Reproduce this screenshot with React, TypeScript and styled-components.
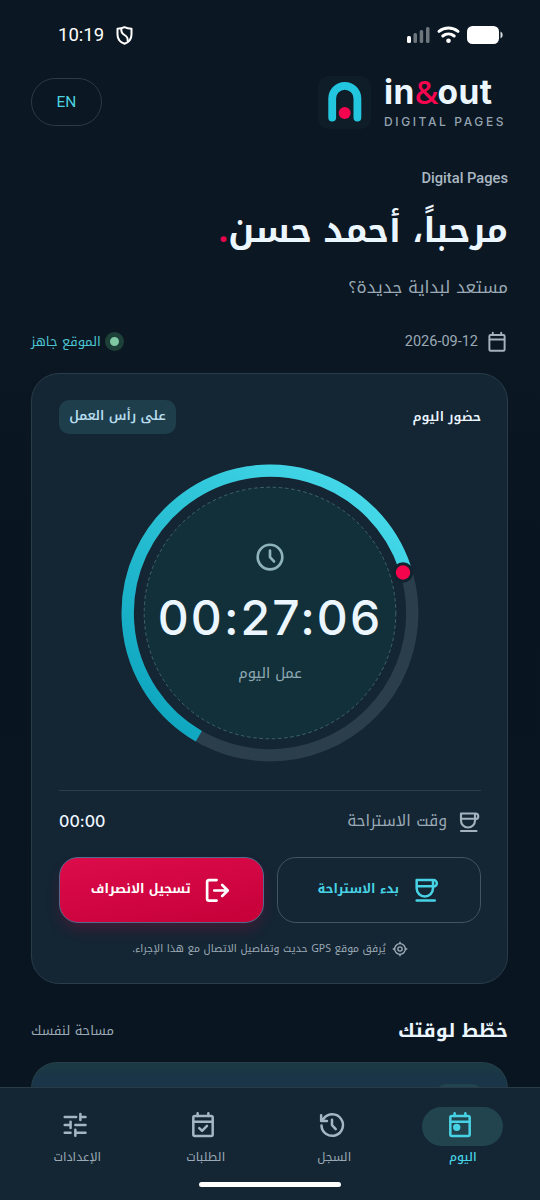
import React from 'react';
import styled, { createGlobalStyle } from 'styled-components';

const arabic = `'Noto Kufi Arabic', Roboto, 'DejaVu Sans', sans-serif`;

const GlobalStyle = createGlobalStyle`
  * { box-sizing: border-box; }
  body { margin: 0; background: #0b1722; }
`;

const Screen = styled.div`
  width: 540px;
  height: 1200px;
  overflow: hidden;
  display: flex;
  flex-direction: column;
  background: linear-gradient(180deg, #0b1722 0%, #0b1722 28%, #081420 45%, #091520 100%);
  color: #ecf6ff;
  font-family: ${arabic};
`;

const StatusBar = styled.header`
  display: flex;
  justify-content: space-between;
  align-items: center;
  height: 54px;
  flex: none;
  padding: 16px 37px 0 58px;
`;

const Cluster = styled.div<{ $gap: number }>`
  display: flex;
  align-items: center;
  gap: ${(p) => p.$gap}px;
`;

const Time = styled.span`
  font: 400 18.5px/24px Roboto, sans-serif;
  color: #fff;
`;

const Content = styled.main`
  flex: 1;
  min-height: 0;
  overflow: hidden;
  padding: 16px 32px 0 31px;
  display: flex;
  flex-direction: column;
`;

const TopRow = styled.div`
  display: flex;
  justify-content: space-between;
  align-items: center;
  height: 64px;
  flex: none;
`;

const LangButton = styled.button`
  width: 71px;
  height: 48px;
  border-radius: 24px;
  border: 1px solid #2b3a46;
  background: none;
  color: #4cd0df;
  font: 400 15.5px/20px Roboto, sans-serif;
  padding: 0;
`;

const Brand = styled.div`
  display: flex;
  align-items: center;
  gap: 13px;
  width: 190px;
`;

const BrandTile = styled.div`
  width: 53px;
  height: 53px;
  flex: none;
  border-radius: 11px;
  background: #0f1d29;
`;

const BrandText = styled.div`
  display: flex;
  flex-direction: column;
`;

const BrandName = styled.div`
  font: 700 33.5px/46px Inter, sans-serif;
  letter-spacing: 0.4px;
  color: #ecf6ff;
  white-space: nowrap;
  margin: -7px 0 -5px;
`;

const Ampersand = styled.span`
  color: #f5054f;
  font-family: 'Noto Sans', sans-serif;
  font-size: 32px;
  line-height: 40px;
  font-weight: 500;
  letter-spacing: -0.8px;
`;

const BrandTag = styled.div`
  font: 500 12px/14px Inter, sans-serif;
  letter-spacing: 2.6px;
  color: #94a3b0;
  white-space: nowrap;
  margin-top: 5px;
`;

const Greeting = styled.section`
  display: flex;
  flex-direction: column;
  height: 192px;
  flex: none;
  direction: rtl;
`;

const Company = styled.div`
  font: 500 14.7px/20px Roboto, sans-serif;
  color: #aab8c3;
  margin-top: 34px;
`;

const Hello = styled.h1`
  margin: 13px 0 0;
  height: 60px;
  font-family: ${arabic};
  font-size: 34.1px;
  font-weight: 700;
  line-height: 60px;
  white-space: nowrap;
`;

const Accent = styled.span`
  color: #e3064d;
`;

const Ready = styled.p`
  margin: 12px 0 0;
  font-size: 17px;
  line-height: 28px;
  color: #9aa9b5;
  white-space: nowrap;
`;

const Between = styled.div<{ $h: number; $top?: number }>`
  display: flex;
  direction: rtl;
  align-items: center;
  justify-content: space-between;
  height: ${(p) => p.$h}px;
  padding-top: ${(p) => p.$top ?? 0}px;
  flex: none;
`;

const Label = styled.span<{ $size: number; $color: string; $weight?: number; $latin?: string }>`
  font-family: ${(p) => p.$latin ?? arabic};
  font-size: ${(p) => p.$size}px;
  font-weight: ${(p) => p.$weight ?? 400};
  font-feature-settings: 'calt' ${(p) => (p.$latin ? 0 : 1)};
  color: ${(p) => p.$color};
  line-height: 1.5;
  white-space: nowrap;
`;

const Dot = styled.i`
  width: 19px;
  height: 19px;
  border-radius: 50%;
  border: 5.5px solid #1d4039;
  background: #7fcaa2;
`;

const Card = styled.section`
  height: 611px;
  flex: none;
  margin-top: 15px;
  border: 1px solid #2a3c49;
  border-radius: 28px;
  background: #142533;
  padding: 27px 26px 0 27px;
  display: flex;
  flex-direction: column;
`;

const CardHead = styled(Between)`
  padding-bottom: 2px;
`;

const Badge = styled.span`
  width: 117px;
  height: 34px;
  display: flex;
  align-items: center;
  justify-content: center;
  padding-bottom: 2px;
  border-radius: 10px;
  background: #1f3e4c;
`;

const Dial = styled.div`
  display: grid;
  place-items: center;
  height: 355px;
  flex: none;
  > * { grid-area: 1 / 1; }
`;

const DialFace = styled.div`
  display: flex;
  flex-direction: column;
  align-items: center;
  gap: 15px;
  height: 144px;
`;

const Timer = styled.div`
  font: 500 48px/60px Inter, sans-serif;
  font-feature-settings: 'calt' 0;
  letter-spacing: 2.1px;
  color: #ecf6ff;
`;

const Divider = styled.hr`
  width: 100%;
  height: 1px;
  flex: none;
  border: 0;
  margin: 0;
  background: #2c3e4b;
`;

const Actions = styled.div`
  display: grid;
  grid-template-columns: 1fr 1fr;
  direction: rtl;
  gap: 13px;
  flex: none;
  margin-top: 5px;
`;

const Action = styled.button<{ $primary?: boolean }>`
  height: 66px;
  border-radius: 19px;
  border: 1px solid ${(p) => (p.$primary ? '#55698c' : '#405461')};
  background: ${(p) => (p.$primary ? 'linear-gradient(170deg, #dc0c4b, #c60039)' : 'none')};
  box-shadow: ${(p) => (p.$primary ? '0 8px 16px -4px rgba(214, 5, 70, 0.27)' : 'none')};
  display: flex;
  align-items: center;
  justify-content: center;
  gap: ${(p) => (p.$primary ? 11 : 13)}px;
  padding: 0 ${(p) => (p.$primary ? 2 : 0)}px 1px 0;
  font-family: ${arabic};
`;

const Note = styled.div`
  display: flex;
  direction: rtl;
  align-items: center;
  justify-content: center;
  gap: 6px;
  height: 51px;
`;

const Plan = styled.div`
  height: 40px;
  flex: none;
  border: 1px solid #263f48;
  border-bottom: 0;
  border-radius: 26px 26px 0 0;
  background: linear-gradient(180deg, #1b3944, #1a3547 40%);
  display: flex;
  justify-content: flex-end;
  padding: 21px 22px 0;
`;

const PlanChip = styled.div`
  width: 52px;
  height: 30px;
  border-radius: 14px;
  background: #22444e;
`;

const NavBar = styled.nav`
  height: 113px;
  flex: none;
  border-top: 1.5px solid #2a3c4a;
  background: #142533;
  display: flex;
  flex-direction: column;
  align-items: center;
`;

const NavItems = styled.div`
  display: flex;
  direction: rtl;
  width: 514px;
  height: 94px;
  padding-top: 19px;
`;

const NavItem = styled.div`
  flex: 1;
  display: flex;
  flex-direction: column;
  align-items: center;
  gap: 2px;
`;

const NavPill = styled.div<{ $active?: boolean }>`
  width: 81px;
  height: 39px;
  border-radius: 20px;
  display: flex;
  align-items: center;
  justify-content: center;
  padding: 0 5px 3px 0;
  background: ${(p) => (p.$active ? '#21444f' : 'none')};
`;

const HomeBar = styled.div`
  width: 142px;
  height: 5px;
  border-radius: 3px;
  background: #fff;
`;

type IconProps = { size: number; color: string; w?: number; children: React.ReactNode };
const Icon = ({ size, color, w = 2.15, children }: IconProps) => (
  <svg width={size} height={size} viewBox="0 0 24 24" fill="none" stroke={color} strokeWidth={w}
    strokeLinecap="round" strokeLinejoin="round">{children}</svg>
);

const Calendar = ({ size, color, children }: { size: number; color: string; children?: React.ReactNode }) => (
  <Icon size={size} color={color}>
    <rect x="3.7" y="4.3" width="16.6" height="17.2" rx="1.3" />
    <path d="M4 9.2h16M7.4 2v2.3M16.6 2v2.3" />
    {children}
  </Icon>
);

const Cup = ({ size, color }: { size: number; color: string }) => (
  <Icon size={size} color={color}>
    <path d="M4 3.5h14.5a2.75 2.75 0 0 1 0 5.6H18V3.5M4 3.5v7a7 7 0 0 0 14 0V9.1M4 8.7h14M4 21h15.5" />
  </Icon>
);

const Exit = () => (
  <Icon size={28} color="#fff" w={2.3}>
    <path d="M12.5 3.5H6A1.6 1.6 0 0 0 4.4 5v14.5A1.6 1.6 0 0 0 6 21.1h6.5M10.5 12.4H22M17.3 7.7l4.8 4.7-4.8 4.7" />
  </Icon>
);

const RingDial = () => (
  <svg width="300" height="300" viewBox="-150 -150 300 300" fill="none">
    <defs>
      <linearGradient id="arc" x1="-90" y1="130" x2="110" y2="-100" gradientUnits="userSpaceOnUse">
        <stop offset="0" stopColor="#0ea6bf" />
        <stop offset="0.6" stopColor="#2dc4d8" />
        <stop offset="1" stopColor="#43d7e8" />
      </linearGradient>
    </defs>
    <circle r="142.3" stroke="#2a3e4c" strokeWidth="12.3" />
    <path d="M-71.2 123.2A142.3 142.3 0 1 1 135 -45" stroke="url(#arc)" strokeWidth="12.3" />
    <circle r="125.8" fill="#12303a" stroke="#3d646b" strokeWidth="1" strokeDasharray="3.6 2.6" />
    <circle cx="133" cy="-40.5" r="10.3" fill="#122330" />
    <circle cx="133" cy="-40.5" r="7.2" fill="#f4044c" />
  </svg>
);

const muted = '#a5b5c4';
const soft = '#9aa9b5';

export default function App() {
  return (
    <Screen>
      <GlobalStyle />
      <StatusBar>
        <Cluster $gap={12}>
          <Time>10:19</Time>
          <svg width="17" height="19" viewBox="0 0 17 19" fill="none" stroke="#fff" strokeWidth="2" strokeLinejoin="round">
            <path d="M8.5 1.2C6.5 2.3 4 2.8 1.5 2.8V8.5C1.5 13 4.5 16.3 8.5 17.7 12.5 16.3 15.5 13 15.5 8.5V2.8C13 2.8 10.5 2.3 8.5 1.2Z" />
            <path d="M5.3 2.8C5 6 6 7.5 8.5 9 11 10.5 12.3 12 11.5 15" />
          </svg>
        </Cluster>
        <svg width="97" height="20" viewBox="0 0 97 20">
          <rect x="1" y="11" width="4" height="7" rx="1.5" fill="#fff" />
          <g fill="#6e767d">
            <rect x="7.5" y="8" width="3.5" height="10" rx="1.5" />
            <rect x="13.7" y="5" width="3.5" height="13" rx="1.5" />
            <rect x="20" y="2" width="3.5" height="16" rx="1.5" />
          </g>
          <g fill="none" stroke="#fff" strokeWidth="3" strokeLinecap="round">
            <path d="M33 6.3a15 15 0 0 1 19 0M36.8 11a9 9 0 0 1 11.4 0" />
          </g>
          <circle cx="42.5" cy="15.8" r="2.3" fill="#fff" />
          <rect x="61" y="1" width="32" height="18" rx="5.5" fill="#fff" />
          <path d="M94.5 6.5Q96.7 7 96.7 10T94.5 13.5Z" fill="#d8dcdf" />
        </svg>
      </StatusBar>
      <Content>
        <TopRow>
          <LangButton>EN</LangButton>
          <Brand>
            <BrandTile>
              <svg width="53" height="53" viewBox="0 0 53 53" fill="none">
                <path d="M14.2 41.500V22.500a12.600 12.600 0 0 1 25.200 0v19" stroke="#22c7df" strokeWidth="7.8" strokeLinecap="round" />
                <circle cx="26.7" cy="37" r="6" fill="#f5054f" />
              </svg>
            </BrandTile>
            <BrandText>
              <BrandName>in<Ampersand>&amp;</Ampersand>out</BrandName>
              <BrandTag>DIGITAL PAGES</BrandTag>
            </BrandText>
          </Brand>
        </TopRow>
        <Greeting>
          <Company>Digital Pages</Company>
          <Hello>مرحباً، أحمد حسن<Accent>.</Accent></Hello>
          <Ready>مستعد لبداية جديدة؟</Ready>
        </Greeting>
        <Between $h={32}>
          <Cluster $gap={8}>
            <Calendar size={22} color="#a3b2bd" />
            <Label $size={14.5} $color={soft} $latin="Roboto, sans-serif">2026-09-12</Label>
          </Cluster>
          <Cluster $gap={4}>
            <Dot />
            <Label $size={13.1} $color="#4cc3d1">الموقع جاهز</Label>
          </Cluster>
        </Between>
        <Card>
          <CardHead $h={34}>
            <Label $size={13} $color="#ecf6ff" $weight={600}>حضور اليوم</Label>
            <Badge><Label $size={13.1} $color="#b5dcec" $weight={600}>على رأس العمل</Label></Badge>
          </CardHead>
          <Dial>
            <RingDial />
            <DialFace>
              <Icon size={34} color="#8fb3ba" w={2}>
                <circle cx="12" cy="12" r="9.2" />
                <path d="M12 7.200V12l3 3.300" />
              </Icon>
              <Timer>00:27:06</Timer>
              <Label $size={14.6} $color="#8fa9b3">عمل اليوم</Label>
            </DialFace>
          </Dial>
          <Divider />
          <Between $h={61}>
            <Cluster $gap={10}>
              <Cup size={24} color="#a3b2bd" />
              <Label $size={15.7} $color={soft}>وقت الاستراحة</Label>
            </Cluster>
            <Label $size={16.1} $color="#ecf6ff" $weight={500} $latin="Inter, sans-serif">00:00</Label>
          </Between>
          <Actions>
            <Action>
              <Cup size={28} color="#47d3e5" />
              <Label $size={12.6} $color="#47d3e5" $weight={700}>بدء الاستراحة</Label>
            </Action>
            <Action $primary>
              <Exit />
              <Label $size={12.7} $color="#fff" $weight={700}>تسجيل الانصراف</Label>
            </Action>
          </Actions>
          <Note>
            <Icon size={16} color="#a3b2bd" w={2}>
              <circle cx="12" cy="12" r="8" />
              <circle cx="12" cy="12" r="3.2" />
              <path d="M12 1.8v2M12 20.2v2M1.8 12h2M20.2 12h2" />
            </Icon>
            <Label $size={10.5} $color={soft}>يُرفق موقع GPS حديث وتفاصيل الاتصال مع هذا الإجراء.</Label>
          </Note>
        </Card>
        <Between $h={78} $top={16}>
          <Label $size={19} $color="#ecf6ff" $weight={700}>خطّط لوقتك</Label>
          <Label $size={13.1} $color={soft}>مساحة لنفسك</Label>
        </Between>
        <Plan><PlanChip /></Plan>
      </Content>
      <NavBar>
        <NavItems>
          <NavItem>
            <NavPill $active>
              <Calendar size={28} color="#47d3e5"><circle cx="9.2" cy="14" r="2.1" fill="#47d3e5" /></Calendar>
            </NavPill>
            <Label $size={12} $color="#47d3e5" $weight={500}>اليوم</Label>
          </NavItem>
          <NavItem>
            <NavPill>
              <Icon size={28} color={muted}>
                <path d="M3 12.5A9.2 9.2 0 1 0 5 6.3L3 8.5M2.7 3.7v4.9h5M12 7.4v4.8l3.2 3.4" />
              </Icon>
            </NavPill>
            <Label $size={12.1} $color={soft}>السجل</Label>
          </NavItem>
          <NavItem>
            <NavPill>
              <Calendar size={28} color={muted}><path d="M8.800 14.700l2.400 2.300 4.200-4.300" /></Calendar>
            </NavPill>
            <Label $size={12.1} $color={soft}>الطلبات</Label>
          </NavItem>
          <NavItem>
            <NavPill>
              <Icon size={28} color={muted}>
                <path d="M3.2 5.2h9.8M16.6 2.6v5.2M16.6 5.2h4.4M3.2 11.9h5M8.2 9.3v5.2M12.3 11.9h8.7M3.2 18.6h5M12.3 16v5.2M12.3 18.6h8.7" />
              </Icon>
            </NavPill>
            <Label $size={12.2} $color={soft}>الإعدادات</Label>
          </NavItem>
        </NavItems>
        <HomeBar />
      </NavBar>
    </Screen>
  );
}
